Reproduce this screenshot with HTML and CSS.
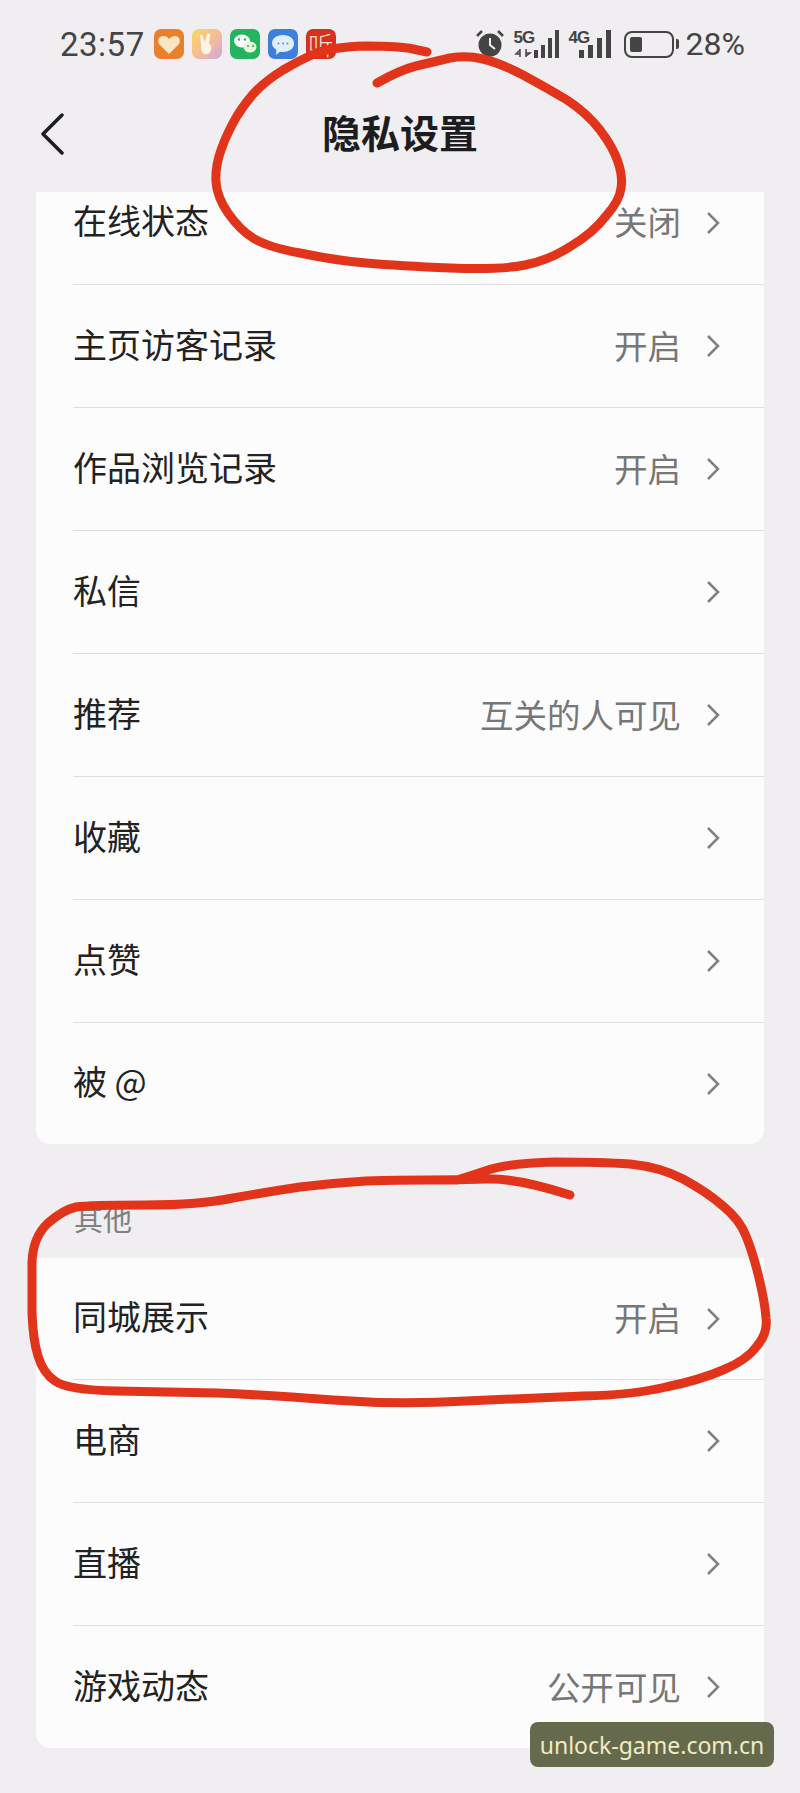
FILE: index.html
```html
<!DOCTYPE html>
<html lang="zh-CN">
<head>
    <meta charset="UTF-8">
    <meta name="viewport" content="width=device-width, initial-scale=1.0">
    <title>隐私设置</title>
    <link rel="stylesheet" href="styles.css">
</head>
<body>

<div class="page">
    <div class="statusbar">
        <span class="time">23:57</span>
        <div class="notify-icons">
            <svg class="notify" viewBox="0 0 30 30"><rect width="30" height="30" rx="7" fill="#ea7f2c"/><path d="M15 25 5 15c-2-4 0-8 4-8 3 0 5 1 6 3 2-2 4-3 6-3 4 0 6 4 4 8z" fill="#fbe6c4"/></svg>
            <svg class="notify" viewBox="0 0 30 30"><defs><linearGradient id="handBg" x1="0" y1="0" x2="1" y2="1"><stop offset="0" stop-color="#f8d85e"/><stop offset=".6" stop-color="#f4b8a0"/><stop offset="1" stop-color="#c9a8e6"/></linearGradient></defs><rect width="30" height="30" rx="7" fill="url(#handBg)"/><path d="M8 6c2-1 3 0 4 5l1 2 2-8c2-1 4 0 3 2l-1 8c3 1 3 5 1 8-2 3-6 3-8 0-1-2-1-5-1-7z" fill="#fdf3e6"/></svg>
            <svg class="notify" viewBox="0 0 30 30"><rect width="30" height="30" rx="7" fill="#22b460"/><ellipse cx="12" cy="12" rx="8" ry="6.500" fill="#fff"/><ellipse cx="20" cy="18" rx="6.500" ry="5.500" fill="#e8f6dc"/><circle cx="9" cy="10.500" r="1.200" fill="#22b460"/><circle cx="15" cy="10.500" r="1.200" fill="#22b460"/><circle cx="18" cy="17" r="1" fill="#22b460"/><circle cx="23" cy="17" r="1" fill="#22b460"/></svg>
            <svg class="notify" viewBox="0 0 30 30"><rect width="30" height="30" rx="7" fill="#3f7fdc"/><path d="M15 6c7 0 11 4 11 8.500S22 23 15 23c-1 0-2 0-3-.2L8 26l.5-5C6 19 4 17 4 14.500 4 10 8 6 15 6z" fill="#dff0fb"/><circle cx="10.500" cy="14.500" r="1" fill="#6b8fc4"/><circle cx="15" cy="14.500" r="1" fill="#6b8fc4"/><circle cx="19.500" cy="14.500" r="1" fill="#6b8fc4"/></svg>
            <span class="notify notify-ting">听</span>
        </div>
        <div class="status-right">
            <svg class="alarm" viewBox="0 0 28 28"><circle cx="14" cy="15" r="11.500" fill="#444"/><path d="M14 8v7l5 4" fill="none" stroke="#f0eef0" stroke-width="2"/><path d="M1 6 6 1M27 6l-5-5" stroke="#444" stroke-width="2.500" fill="none"/></svg>
            <div class="net net-5g">
                <div class="net-label">
                    <span>5G</span>
                    <svg class="net-arrows" viewBox="0 0 18 8"><path d="M6 0v8M6 1 2 5h4M12 8V0M12 7l4-3h-4" stroke="#444" stroke-width="1.500" fill="none"/></svg>
                </div>
                <div class="bars"><i class="b1"></i><i class="b2"></i><i class="b3"></i><i class="b4"></i></div>
            </div>
            <div class="net net-4g">
                <div class="net-label"><span>4G</span></div>
                <div class="bars"><i class="b1"></i><i class="b2"></i><i class="b3"></i><i class="b4"></i></div>
            </div>
            <div class="battery"><div class="battery-level"></div></div>
            <div class="battery-tip"></div>
            <span class="percent">28%</span>
        </div>
    </div>

    <div class="header">
        <svg class="back" viewBox="0 0 24 42"><path d="M22 2 3 21l19 19" fill="none" stroke="#1d1d1f" stroke-width="3.500" stroke-linecap="round" stroke-linejoin="round"/></svg>
        <h1 class="title">隐私设置</h1>
    </div>

    <div class="card">
        <div class="row row-clipped"><span class="row-name">在线状态</span><span class="row-value">关闭</span><svg class="chevron" viewBox="0 0 14 24"><path d="M2 2l10 10L2 22"/></svg></div>
        <div class="row"><span class="row-name">主页访客记录</span><span class="row-value">开启</span><svg class="chevron" viewBox="0 0 14 24"><path d="M2 2l10 10L2 22"/></svg></div>
        <div class="row"><span class="row-name">作品浏览记录</span><span class="row-value">开启</span><svg class="chevron" viewBox="0 0 14 24"><path d="M2 2l10 10L2 22"/></svg></div>
        <div class="row"><span class="row-name">私信</span><svg class="chevron" viewBox="0 0 14 24"><path d="M2 2l10 10L2 22"/></svg></div>
        <div class="row"><span class="row-name">推荐</span><span class="row-value">互关的人可见</span><svg class="chevron" viewBox="0 0 14 24"><path d="M2 2l10 10L2 22"/></svg></div>
        <div class="row"><span class="row-name">收藏</span><svg class="chevron" viewBox="0 0 14 24"><path d="M2 2l10 10L2 22"/></svg></div>
        <div class="row"><span class="row-name">点赞</span><svg class="chevron" viewBox="0 0 14 24"><path d="M2 2l10 10L2 22"/></svg></div>
        <div class="row"><span class="row-name">被 @</span><svg class="chevron" viewBox="0 0 14 24"><path d="M2 2l10 10L2 22"/></svg></div>
    </div>

    <div class="section-label">其他</div>

    <div class="card card-other">
        <div class="row"><span class="row-name">同城展示</span><span class="row-value">开启</span><svg class="chevron" viewBox="0 0 14 24"><path d="M2 2l10 10L2 22"/></svg></div>
        <div class="row"><span class="row-name">电商</span><svg class="chevron" viewBox="0 0 14 24"><path d="M2 2l10 10L2 22"/></svg></div>
        <div class="row"><span class="row-name">直播</span><svg class="chevron" viewBox="0 0 14 24"><path d="M2 2l10 10L2 22"/></svg></div>
        <div class="row"><span class="row-name">游戏动态</span><span class="row-value">公开可见</span><svg class="chevron" viewBox="0 0 14 24"><path d="M2 2l10 10L2 22"/></svg></div>
    </div>

    <!-- red marker scribbles on top of the screenshot -->
    <svg class="ink" viewBox="0 0 800 1793">
        <path d="M427 52L413 49Q400 46 366 46Q333 47 316 53Q300 60 283 70Q267 80 257 90Q247 100 237 116Q227 133 221 150Q215 167 216 182Q217 197 228 213Q240 230 253 238Q267 247 300 253Q333 260 366 263Q400 266 450 268Q500 270 525 265Q550 260 571 246Q593 233 606 216Q620 200 621 188Q623 177 618 162Q613 147 600 130Q587 113 567 100Q547 88 523 75Q500 63 483 59Q467 55 450 58Q433 62 416 66Q400 70 377 83"/>
        <path d="M570 1195Q517 1178 487 1179Q457 1180 428 1180Q400 1180 366 1181Q333 1183 300 1187Q267 1192 233 1198Q200 1205 145 1205Q90 1205 76 1207Q63 1210 48 1223Q33 1237 32 1262Q32 1287 32 1313Q33 1340 38 1356Q43 1373 55 1381Q67 1390 117 1391Q167 1392 217 1393Q267 1395 333 1400Q400 1405 466 1401Q533 1398 583 1396Q633 1395 666 1387Q700 1380 723 1370Q747 1360 757 1346Q768 1333 766 1318Q765 1303 759 1278Q753 1253 746 1236Q740 1220 723 1206Q707 1192 683 1179Q660 1167 630 1164Q600 1162 555 1162Q510 1163 488 1170Q467 1177 457 1180"/>
    </svg>

    <div class="watermark">unlock-game.com.cn</div>
</div>

</body>
</html>
```

FILE: styles.css
```css
* {
    box-sizing: border-box;
}
body {
    margin: 0;
    background-color: #f0eef0;
    color: #222;
    font-family: "Noto Sans CJK SC", "Noto Sans", sans-serif;
}
.page {
    position: relative;
    width: 800px;
    height: 1793px;
    overflow: hidden;
}

/* status bar */
.statusbar {
    display: flex;
    align-items: center;
    justify-content: space-between;
    height: 88px;
    padding: 0 55px 0 60px;
    color: #444;
}
.time {
    font-family: Roboto, sans-serif;
    font-size: 33px;
    letter-spacing: 0.5px;
}
.notify-icons {
    display: flex;
    gap: 8px;
    margin-left: 9px;
    margin-right: auto;
}
.notify {
    display: block;
    width: 30px;
    height: 30px;
}
.notify-ting {
    border-radius: 7px;
    background: #d8301f;
    color: #fbe3cf;
    font-size: 25px;
    font-weight: 300;
    line-height: 30px;
    text-align: center;
}
.status-right {
    display: flex;
    align-items: center;
}
.alarm {
    width: 28px;
    height: 28px;
    margin-right: 10px;
}
.net {
    display: flex;
    align-items: flex-end;
    height: 28px;
}
.net-label {
    display: flex;
    flex-direction: column;
    align-items: flex-start;
    flex: none;
    height: 28px;
    font-family: "Liberation Sans", sans-serif;
    font-size: 17px;
    font-weight: 700;
    letter-spacing: -1px;
    line-height: 15px;
}
.net-5g {
    margin-right: 10px;
}
.net-5g .net-label {
    width: 20px;
}
.net-4g {
    margin-right: 13px;
}
.net-4g .net-label {
    width: 20px;
    margin-right: -10px;
}
.net-arrows {
    width: 18px;
    height: 8px;
    margin-top: 4px;
}
.bars {
    display: flex;
    align-items: flex-end;
    gap: 3px;
}
.bars i {
    display: block;
    width: 4px;
    background: #444;
}
.net-4g .bars {
    gap: 4px;
}
.net-4g .bars i {
    width: 5px;
}
.bars .b1 { height: 8px; }
.bars .b2 { height: 13px; }
.bars .b3 { height: 20px; }
.bars .b4 { height: 28px; }
.battery {
    width: 50px;
    height: 27px;
    padding: 4px;
    border: 2px solid #444;
    border-radius: 8px;
}
.battery-level {
    width: 12px;
    height: 100%;
    border-radius: 2px;
    background: #444;
}
.battery-tip {
    width: 3px;
    height: 10px;
    margin: 0 7px 0 2px;
    border-radius: 0 2px 2px 0;
    background: #444;
}
.percent {
    font-family: Roboto, sans-serif;
    font-size: 32px;
}

/* nav header */
.header {
    position: relative;
    display: flex;
    align-items: center;
    justify-content: center;
    height: 104px;
    padding-bottom: 18px;
}
.back {
    position: absolute;
    left: 40px;
    top: 25px;
    width: 24px;
    height: 42px;
}
.title {
    margin: 0;
    font-size: 39px;
    font-weight: 700;
    color: #1d1d1f;
}

/* setting rows */
.card {
    margin: 0 36px;
    border-radius: 0 0 14px 14px;
    background: #fcfcfc;
}
.row {
    display: flex;
    align-items: center;
    height: 123px;
    margin-left: 37px;
    padding-right: 44px;
    border-bottom: 1px solid #dedede;
}
.row:last-child {
    height: 121px;
    border-bottom: none;
}
.row-clipped {
    height: 93px;
    padding-bottom: 31px;
}
.card-other .row:first-child {
    height: 122px;
}
.card-other .row:last-child {
    height: 122px;
}
.row-name {
    margin-right: auto;
    padding-bottom: 6px;
    font-size: 34px;
    color: #222;
}
.row-value {
    margin-right: 25px;
    padding-bottom: 4px;
    font-size: 33.5px;
    color: #777;
}
.chevron {
    width: 14px;
    height: 24px;
    fill: none;
    stroke: #808080;
    stroke-width: 2.500;
}
.section-label {
    height: 114px;
    padding: 54px 0 0 74px;
    font-size: 29px;
    line-height: 40px;
    color: #808080;
}

/* overlays */
.ink {
    position: absolute;
    left: 0;
    top: 0;
    width: 800px;
    height: 1793px;
    fill: none;
    stroke: #e2341a;
    stroke-width: 9;
    stroke-linecap: round;
    stroke-linejoin: round;
}
.watermark {
    position: absolute;
    left: 530px;
    top: 1722px;
    width: 244px;
    height: 45px;
    border-radius: 8px;
    background: #666a4c;
    color: #f0ecc4;
    font-family: "Noto Sans", sans-serif;
    font-size: 23px;
    line-height: 46px;
    text-align: center;
    white-space: nowrap;
}
```
